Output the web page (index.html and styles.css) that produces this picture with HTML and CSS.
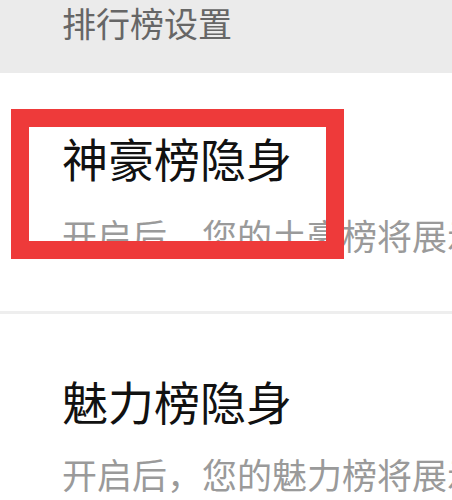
FILE: index.html
```html
<!DOCTYPE html>
<html lang="zh-CN">
	<head>
		<meta charset="UTF-8">
		<meta name="viewport" content="width=device-width, initial-scale=1.0">
		<title>排行榜设置</title>
		<link rel="stylesheet" href="styles.css">
	</head>

	<body>
		<div class="group-head">排行榜设置</div>

		<div class="setting-item first">
			<div class="item-title">神豪榜隐身</div>
			<div class="item-desc">开启后，您的土豪榜将展示为神秘人</div>
			<div class="mark-box"></div>
		</div>

		<div class="divider"></div>

		<div class="setting-item second">
			<div class="item-title">魅力榜隐身</div>
			<div class="item-desc">开启后，您的魅力榜将展示为神秘人</div>
		</div>
	</body>
</html>
```

FILE: styles.css
```css
body {
	margin: 0;
	font-family: "Noto Sans CJK SC", "Noto Sans", sans-serif;
	background-color: #ffffff;
	overflow: hidden;
}

.group-head {
	height: 73px;
	box-sizing: border-box;
	padding: 1px 0 0 62px;
	font-size: 34px;
	line-height: 44px;
	color: #666666;
	background-color: #ebebeb;
}

.setting-item {
	position: relative;
	padding-left: 62px;
}

.setting-item.first {
	height: 238px;
	box-sizing: border-box;
	padding-top: 56px;
}

.setting-item.second {
	padding-top: 58px;
}

.item-title {
	font-size: 46px;
	line-height: 56px;
	color: #111111;
}

.item-desc {
	margin-top: 28px;
	font-size: 35px;
	line-height: 44px;
	color: #9a9a9a;
	white-space: nowrap;
	overflow: hidden;
}

.second .item-desc {
	margin-top: 24px;
}

.divider {
	height: 3px;
	background-color: #eeeeee;
}

/* red marker drawn over the first row */
.mark-box {
	position: absolute;
	left: 11px;
	top: 36px;
	width: 333px;
	height: 150px;
	box-sizing: border-box;
	border: 18px solid #ee3a3a;
}
```
